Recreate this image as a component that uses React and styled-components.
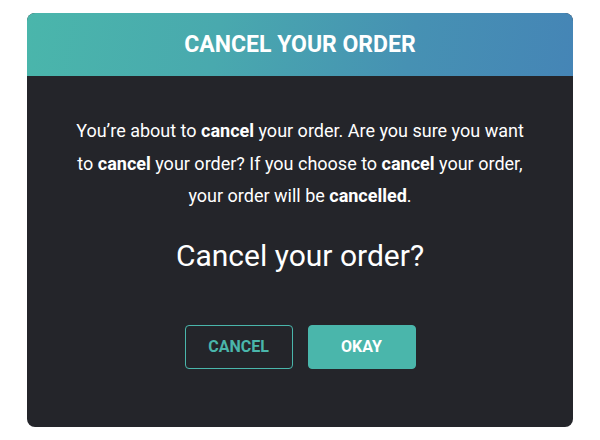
import React from 'react';
import styled, { createGlobalStyle } from 'styled-components';

const GlobalStyle = createGlobalStyle`
  body {
    margin: 0;
    background: #ffffff;
    font-family: Roboto, "Liberation Sans", sans-serif;
  }
`

function App() {
    return (
        <Page>
            <GlobalStyle />
            <Modal>
                <Header>
                    <Title>Cancel your order</Title>
                </Header>
                <Body>
                    <Message>
                        You’re about to <strong>cancel</strong> your order. Are you sure you want
                        to <strong>cancel</strong> your order? If you choose to <strong>cancel</strong> your order,
                        your order will be <strong>cancelled</strong>.
                    </Message>
                    <Question>Cancel your order?</Question>
                    <Actions>
                        <Button>Cancel</Button>
                        <Button primary>Okay</Button>
                    </Actions>
                </Body>
            </Modal>
        </Page>
    )
}

export default App


const Page = styled.div`
    padding: 13px 27px;
`

const Modal = styled.div`
    width: 546px;
    border-radius: 8px;
    overflow: hidden;
    background-color: #24252a;
`

const Header = styled.div`
    height: 63px;
    display: flex;
    align-items: center;
    justify-content: center;
    background: linear-gradient(100deg, #4ab6ab 0%, #49a9ae 35%, #4691b3 70%, #4585b6 100%);
`

const Title = styled.h2`
    margin: 0;
    color: #ffffff;
    font-size: 23px;
    font-weight: 700;
    text-transform: uppercase;
`

const Body = styled.div`
    display: flex;
    flex-direction: column;
    align-items: center;
    padding: 39px 20px 58px;
`

const Message = styled.p`
    margin: 0;
    max-width: 462px;
    color: #ffffff;
    font-size: 18px;
    line-height: 32.5px;
    text-align: center;

    > strong {
        font-weight: 700;
    }
`

const Question = styled.h3`
    margin: 24px 0 0;
    color: #ffffff;
    font-size: 30px;
    font-weight: 400;
    line-height: 38px;
`

const Actions = styled.div`
    display: flex;
    gap: 15px;
    margin-top: 50px;
`

const Button = styled.button`
    width: 108px;
    height: 44px;
    border-radius: 4px;
    border: 1px solid #4ab6ab;
    background-color: ${props => props.primary ? '#4ab6ab' : 'transparent'};
    color: ${props => props.primary ? '#ffffff' : '#4ab6ab'};
    font-family: Roboto, "Liberation Sans", sans-serif;
    font-size: 16px;
    font-weight: 700;
    text-transform: uppercase;
    cursor: pointer;
`
